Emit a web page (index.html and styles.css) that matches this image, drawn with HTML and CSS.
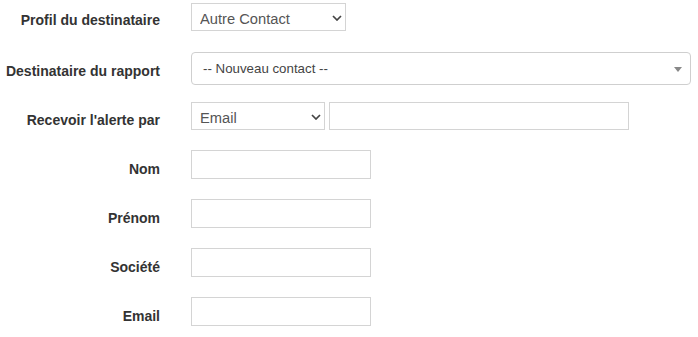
FILE: index.html
```html
<!DOCTYPE html>
<html lang="fr">
<head>
<meta charset="utf-8">
<link rel="stylesheet" href="styles.css">
</head>
<body>
<form class="form">
  <div class="row row-1">
    <label class="lbl">Profil du destinataire</label>
    <div class="ctl">
      <div class="sel sel-profil">
        <select><option>Autre Contact</option></select>
        <svg class="chev" width="10" height="6" viewBox="0 0 10 6"><path d="M1 1 L5 5 L9 1" fill="none" stroke="#444" stroke-width="1.7"/></svg>
      </div>
    </div>
  </div>
  <div class="row row-2">
    <label class="lbl">Destinataire du rapport</label>
    <div class="ctl">
      <div class="s2">
        <span class="s2-text">-- Nouveau contact --</span>
        <span class="s2-arrow"></span>
      </div>
    </div>
  </div>
  <div class="row row-3">
    <label class="lbl">Recevoir l'alerte par</label>
    <div class="ctl">
      <div class="sel sel-email">
        <select><option>Email</option></select>
        <svg class="chev" width="10" height="6" viewBox="0 0 10 6"><path d="M1 1 L5 5 L9 1" fill="none" stroke="#444" stroke-width="1.7"/></svg>
      </div>
      <input class="inp inp-wide" type="text">
    </div>
  </div>
  <div class="row">
    <label class="lbl">Nom</label>
    <div class="ctl"><input class="inp" type="text"></div>
  </div>
  <div class="row">
    <label class="lbl">Prénom</label>
    <div class="ctl"><input class="inp" type="text"></div>
  </div>
  <div class="row">
    <label class="lbl">Société</label>
    <div class="ctl"><input class="inp" type="text"></div>
  </div>
  <div class="row">
    <label class="lbl">Email</label>
    <div class="ctl"><input class="inp" type="text"></div>
  </div>
</form>
</body>
</html>
```
FILE: styles.css
```css
* { box-sizing: border-box; }
html, body { margin: 0; padding: 0; background: #fff; }
body { font-family: "Liberation Sans", Arial, sans-serif; color: #333; }
.form { padding-top: 3px; }
.row {
  display: flex;
  align-items: flex-start;
  height: 28px;
  margin-bottom: 21px;
}
.row-2 { height: 33px; margin-bottom: 17px; }
.row-3 { margin-bottom: 20px; }
.lbl {
  width: 160px;
  text-align: right;
  font-weight: bold;
  font-size: 14px;
  line-height: 19px;
  padding-top: 10px;
  color: #333;
  flex: none;
}
.row-1 .lbl { padding-top: 8px; }
.row-3 .lbl { padding-top: 9px; }
.ctl {
  margin-left: 31px;
  display: flex;
  gap: 4px;
}
.sel { position: relative; height: 28px; }
.sel select {
  appearance: none;
  -webkit-appearance: none;
  height: 28px;
  width: 100%;
  border: 1px solid #d4d4d4;
  border-radius: 0;
  background: #fff;
  font-family: "Liberation Sans", Arial, sans-serif;
  font-size: 14.7px;
  color: #555;
  padding: 4px 8px 0;
  margin: 0;
}
.sel-profil { width: 155px; }
.sel-email { width: 134px; }
.chev { position: absolute; right: 4px; top: 12px; }
.s2 {
  width: 500px;
  height: 33px;
  border: 1px solid #cfcfcf;
  border-radius: 4px;
  display: flex;
  align-items: center;
  padding: 0 11px;
  position: relative;
}
.s2-text { font-size: 13.3px; color: #444; }
.s2-arrow {
  position: absolute;
  right: 8px;
  top: 14px;
  border-left: 4px solid transparent;
  border-right: 4px solid transparent;
  border-top: 5px solid #888;
}
.inp {
  width: 180px;
  height: 29px;
  border: 1px solid #d4d4d4;
  border-radius: 0;
  margin: 0;
  padding: 0 8px;
  font-size: 14px;
}
.row-3 .inp { height: 28px; }
.inp-wide { width: 300px; }
```
